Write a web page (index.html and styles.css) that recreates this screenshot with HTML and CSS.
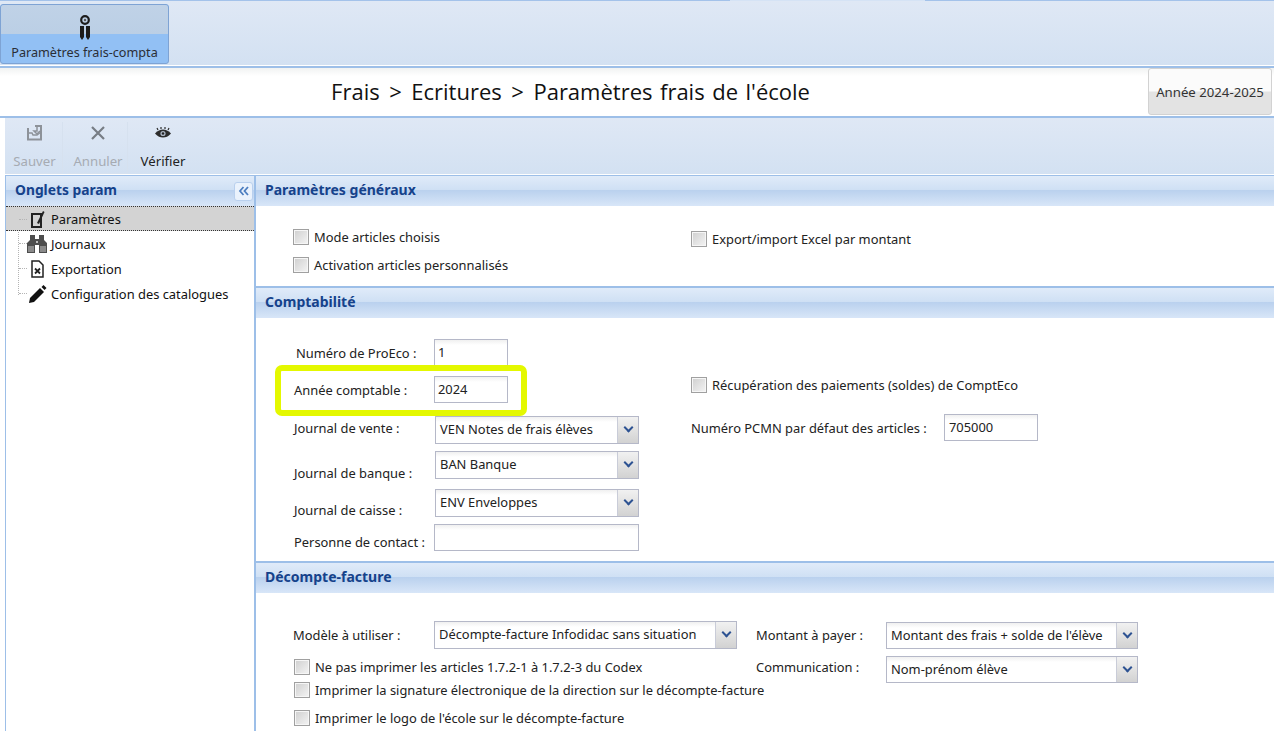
FILE: index.html
```html
<!DOCTYPE html>
<html lang="fr">
<head>
<meta charset="utf-8">
<title>Paramètres frais de l'école</title>
<link rel="stylesheet" href="styles.css">
</head>
<body>
<header class="ribbon">
  <button class="ribbon-btn">
    <span class="ribbon-top">
      <svg class="medal" width="12" height="25" viewBox="0 0 12 25"><circle cx="6" cy="5" r="3.800" fill="none" stroke="#1c1c1c" stroke-width="2.200"/><circle cx="6" cy="5" r="1.200" fill="#555"/><path d="M1 11h4v11l-2 3-2-3zM7 11h4v11l-2 3-2-3z" fill="#1c1c1c"/></svg>
    </span>
    <span class="ribbon-label">Paramètres frais-compta</span>
  </button>
</header>
<div class="titlebar">
  <h1 class="title">Frais <span class="sep">&gt;</span> Ecritures <span class="sep">&gt;</span> Paramètres frais de l'école</h1>
  <button class="year-btn">Année 2024-2025</button>
</div>
<div class="toolbar">
  <div class="tool disabled t1">
    <svg width="18" height="18" viewBox="0 0 18 18"><path d="M2 4v11.500h13V2h-6" fill="none" stroke="#8d9299" stroke-width="2"/><path d="M2 9h4l1 2h4l4-3" fill="none" stroke="#8d9299" stroke-width="1.500"/><path d="M11 2v5H8l3 3 3-3" fill="none" stroke="#8d9299" stroke-width="1.500"/></svg>
    <span>Sauver</span>
  </div>
  <div class="tool disabled t2">
    <svg width="18" height="18" viewBox="0 0 18 18"><path d="M3 3l12 12M15 3L3 15" stroke="#777d85" stroke-width="2.200"/></svg>
    <span>Annuler</span>
  </div>
  <div class="tool t3">
    <svg width="18" height="18" viewBox="0 0 18 18"><path d="M1 9.500c3-3 5-4 8-4s5 1 8 4c-3 3-5 4-8 4s-5-1-8-4z" fill="#2c2c2c"/><path d="M4 6L3 4M7 5V3M11 5V3M14 6l1-2" stroke="#2c2c2c" stroke-width="1.200"/><circle cx="9" cy="9.500" r="2.600" fill="#aab4c2"/><circle cx="9" cy="9.500" r="1.200" fill="#222"/></svg>
    <span>Vérifier</span>
  </div>
</div>
<main class="workspace">
  <aside class="sidebar">
    <div class="side-head">
      <span class="side-title">Onglets param</span>
      <span class="collapse">
        <svg width="12" height="10" viewBox="0 0 12 10"><path d="M5.500 1L2 5l3.500 4M10 1L6.500 5 10 9" fill="none" stroke="#4c7ec0" stroke-width="1.800"/></svg>
      </span>
    </div>
    <ul class="tree">
      <li class="node selected">
        <svg class="ico" width="20" height="20" viewBox="0 0 20 20"><path d="M5 5h9v13H5z" fill="none" stroke="#222" stroke-width="2"/><path d="M10 14l6-12 1.500 1L12 15z" fill="#222"/></svg>
        <span>Paramètres</span>
      </li>
      <li class="node">
        <svg class="ico" width="20" height="20" viewBox="0 0 20 20"><path d="M3 1h5v4h4V1h5v5l3 3v10h-8v-8H8v8H0V9l3-3z" fill="#4d4d4d"/><path d="M1 12h6v6H1zM13 12h6v6h-6z" fill="#8a8a8a"/><path d="M9 7h2v2H9z" fill="#bbb"/></svg>
        <span>Journaux</span>
      </li>
      <li class="node">
        <svg class="ico" width="20" height="20" viewBox="0 0 20 20"><path d="M5 2h7l4 4v12H5z" fill="#fff" stroke="#222" stroke-width="1.500"/><path d="M8 9.500l5 5M13 9.500l-5 5" stroke="#222" stroke-width="1.800"/></svg>
        <span>Exportation</span>
      </li>
      <li class="node">
        <svg class="ico" width="20" height="20" viewBox="0 0 20 20"><path d="M2 19l1-5L13 4l4 4L7 18z" fill="#111"/><path d="M14.500 3l2-2 3 3-2 2z" fill="#111"/></svg>
        <span>Configuration des catalogues</span>
      </li>
    </ul>
  </aside>
  <section class="content">
    <h2 class="sec-head">Paramètres généraux</h2>
    <div class="sec-body general">
      <div class="col-left">
        <label class="check r1"><i class="box"></i>Mode articles choisis</label>
        <label class="check r2"><i class="box"></i>Activation articles personnalisés</label>
      </div>
      <label class="check r3"><i class="box"></i>Export/import Excel par montant</label>
    </div>

    <h2 class="sec-head">Comptabilité</h2>
    <div class="sec-body compta">
      <div class="compta-left">
        <div class="row h-proeco"><span class="lab shift2">Numéro de ProEco :</span><span class="field short">1</span></div>
        <div class="row h-annee"><span class="lab">Année comptable :</span><span class="field short">2024</span></div>
        <div class="row h-vente"><span class="lab">Journal de vente :</span><span class="combo j-wide">VEN Notes de frais élèves<b class="arrow"></b></span></div>
        <div class="row h-banque"><span class="lab drop">Journal de banque :</span><span class="combo j-wide">BAN Banque<b class="arrow"></b></span></div>
        <div class="row h-caisse"><span class="lab drop2">Journal de caisse :</span><span class="combo j-wide">ENV Enveloppes<b class="arrow"></b></span></div>
        <div class="row h-contact"><span class="lab">Personne de contact :</span><span class="field contact"></span></div>
      </div>
      <div class="compta-right">
        <label class="check"><i class="box"></i>Récupération des paiements (soldes) de ComptEco</label>
        <div class="pcmn"><span class="pcmn-lab">Numéro PCMN par défaut des articles :</span><span class="field pcmn-field">705000</span></div>
      </div>
      <div class="highlight"></div>
    </div>

    <h2 class="sec-head">Décompte-facture</h2>
    <div class="sec-body decompte">
      <div class="d-left">
        <div class="d-model"><span class="d-lab">Modèle à utiliser :</span><span class="combo model">Décompte-facture Infodidac sans situation<b class="arrow"></b></span></div>
        <label class="check c1"><i class="box"></i>Ne pas imprimer les articles 1.7.2-1 à 1.7.2-3 du Codex</label>
        <label class="check c2"><i class="box"></i>Imprimer la signature électronique de la direction sur le décompte-facture</label>
        <label class="check c3"><i class="box"></i>Imprimer le logo de l'école sur le décompte-facture</label>
      </div>
      <div class="d-right">
        <div class="d-row"><span class="d-rlab">Montant à payer :</span><span class="combo pay">Montant des frais + solde de l'élève<b class="arrow"></b></span></div>
        <div class="d-row second"><span class="d-rlab">Communication :</span><span class="combo pay">Nom-prénom élève<b class="arrow"></b></span></div>
      </div>
    </div>
  </section>
</main>
</body>
</html>
```

FILE: styles.css
```css
* { box-sizing: border-box; }
html, body { margin: 0; padding: 0; height: 100%; overflow: hidden; background: #fff; }
body { width: 1274px; height: 731px; font-family: "Noto Sans", "DejaVu Sans", sans-serif; font-size: 12.9px; color: #222; }
h1, h2, ul { margin: 0; padding: 0; list-style: none; }
button { font: inherit; color: inherit; padding: 0; cursor: default; }

.ribbon { position: relative; height: 66px; padding-top: 4px; background: linear-gradient(#dfe8f5, #d3e1f2); border-top: 1px solid #a3c2ea; border-bottom: 1px solid #fff; }
.ribbon::before { content: ""; position: absolute; left: 730px; top: -1px; width: 195px; height: 1px; background: #d5e3f5; }
.ribbon-btn { display: flex; flex-direction: column; width: 169px; height: 60px; border: 1px solid #7ea3d4; border-radius: 3px; background: #92c0f4; margin-top: -1px; }
.ribbon-top { display: flex; justify-content: center; align-items: flex-start; width: 100%; height: 29px; flex: none; background: linear-gradient(#c0d2e7, #bbcfe5); padding-top: 10px; border-radius: 3px 3px 0 0; }
.medal { flex: none; position: relative; }
.ribbon-label { width: 100%; text-align: center; line-height: 18px; padding-top: 9px; font-size: 12.65px; color: #2a2e36; }

.titlebar { display: flex; height: 52px; border-top: 2px solid #9dbfe8; border-bottom: 2px solid #9dbfe8; background: linear-gradient(#f1f3f2, #fff 8px); }
.title { width: 1148px; padding-right: 7px; text-align: center; font-size: 22px; word-spacing: 1.800px; font-weight: 400; line-height: 46px; color: #111; font-family: "Open Sans", "Noto Sans", sans-serif; }
.sep { margin: 0 2px; }
.year-btn { width: 124px; height: 47px; border: 1px solid #d2d2d2; border-radius: 3px; background: linear-gradient(#fbfbfb 48%, #e3e3e3 52%); font-size: 13.2px; color: #333; }

.toolbar { display: flex; height: 57px; margin-left: 5px; background: linear-gradient(#dfe8f5, #d3e1f2); border-bottom: 1px solid #fff; padding-top: 4px; }
.tool { display: flex; flex-direction: column; align-items: center; gap: 10px; height: 52px; font-size: 13.2px; color: #222; line-height: 18px; }
.tool.disabled { color: #a6abb2; border: 1px solid #d6e1ef; border-width: 0 1px 1px 0; }
.t1 { width: 58px; padding-left: 2px; }
.t2 { width: 61px; margin-left: 4px; padding-left: 2px; }
.t3 { width: 68px; margin-left: 1px; }
.tool svg { margin-top: 2px; }

.workspace { display: flex; height: 556px; padding-left: 5px; background: #fff; }
.sidebar { width: 251px; flex: none; background: #fff; border: solid #9dbfe8; border-width: 1px 2px 0 1px; }
.side-head { display: flex; align-items: center; justify-content: space-between; height: 30px; padding: 0 1px 4px 9px; background: linear-gradient(#e0ebf9, #cfe0f4 46%, #bad1ee 48%, #d8e6f8); }
.side-title { font-weight: 700; color: #15428b; font-size: 13.8px; }
.collapse { display: flex; align-items: center; justify-content: center; width: 19px; height: 19px; margin-top: 4px; border: 1px solid #b9d0ee; border-radius: 3px; background: #eaf2fc; }
.tree { position: relative; }
.tree::before { content: ""; position: absolute; left: 12px; top: 2px; height: 87px; border-left: 1px dotted #b4b4b4; }
.node { position: relative; display: flex; align-items: center; height: 25px; padding-left: 21px; gap: 4px; color: #111; }
.node::before { content: ""; position: absolute; left: 13px; top: 12px; width: 8px; border-top: 1px dotted #b4b4b4; }
.node.selected { background: #d3d3d3; border-top: 1px dotted #333; border-bottom: 1px dotted #333; }
.ico { flex: none; }

.content { flex: 1; min-width: 0; background: #fff; border-top: 1px solid #9dbfe8; }
.sec-head { height: 30px; padding-left: 9px; font-size: 14px; font-weight: 700; line-height: 28px; color: #15428b; background: linear-gradient(#e0ebf9, #cfe0f4 46%, #bad1ee 48%, #d8e6f8); }
.sec-body { position: relative; background: #fff; border-bottom: 2px solid #9dbfe8; }

.check { display: flex; align-items: center; gap: 5px; height: 20px; white-space: nowrap; color: #222; }
.box { width: 16px; height: 16px; flex: none; border: 1px solid #a0a0a0; box-shadow: inset 0 0 0 1px #f6f6f6; background: linear-gradient(135deg, #cfcfcf, #f4f4f4); }

.general { display: flex; height: 82px; padding: 21px 0 0 37px; }
.col-left { width: 398px; }
.r2 { margin-top: 8px; }
.r3 { margin-top: 2px; align-self: flex-start; }

.compta { display: flex; height: 245px; padding: 21px 0 0 38px; }
.compta-left { width: 397px; }
.row { display: flex; align-items: flex-start; }
.lab { width: 140px; flex: none; line-height: 18px; }
.shift2 { padding-left: 2px; }
.h-proeco { height: 37px; }
.h-proeco .lab { padding-top: 5px; }
.h-annee { height: 40px; }
.h-annee .lab { padding-top: 5px; }
.h-vente { height: 35px; }
.h-vente .lab { padding-top: 3px; }
.h-banque { height: 38px; }
.h-caisse { height: 35px; }
.drop { padding-top: 13px; }
.drop2 { padding-top: 12px; }
.h-contact .lab { padding-top: 9px; }
.field { display: block; height: 27px; border: 1px solid #b5b8c8; padding: 0 0 0 3px; line-height: 25px; background: linear-gradient(#f0f0f0, #fff 5px); color: #222; }
.short { width: 74px; }
.contact { width: 205px; }
.combo { position: relative; display: block; height: 28px; border: 1px solid #b5b8c8; padding: 0 24px 0 4px; line-height: 25px; background: linear-gradient(#f0f0f0, #fff 5px); color: #222; white-space: nowrap; overflow: hidden; }
.j-wide { width: 204px; margin-left: 1px; }
.arrow { position: absolute; top: 0; right: 0; width: 21px; height: 100%; border-left: 1px solid #c9ccd8; background: linear-gradient(#f1f1f1, #d2d2d2); }
.arrow::after { content: ""; position: absolute; left: 7px; top: 7px; width: 5px; height: 5px; border: solid #2d5292; border-width: 0 2.500px 2.500px 0; transform: rotate(45deg); }

.compta-right { padding-top: 36px; }
.pcmn { display: flex; align-items: center; margin-top: 19px; }
.pcmn-lab { width: 253px; flex: none; }
.pcmn-field { width: 94px; padding-left: 4px; }
.highlight { position: absolute; left: 19px; top: 47px; width: 252px; height: 51px; border: 6px solid #e4f800; border-radius: 7px; pointer-events: none; }

.decompte { display: flex; height: 139px; padding: 28px 0 0 37px; border-bottom: 0; }
.d-left { width: 463px; flex: none; }
.d-model { display: flex; align-items: center; }
.d-lab { width: 141px; flex: none; }
.model { width: 303px; }
.c1, .c2, .c3 { margin-left: 1px; }
.c1 { margin-top: 8px; }
.c2 { margin-top: 3px; }
.c3 { margin-top: 8px; }
.d-row { display: flex; align-items: center; }
.d-rlab { width: 130px; flex: none; }
.pay { width: 252px; height: 27px; margin-top: 1px; }
.second { margin-top: 6px; }
.second .d-rlab { margin-bottom: 4px; }
```
